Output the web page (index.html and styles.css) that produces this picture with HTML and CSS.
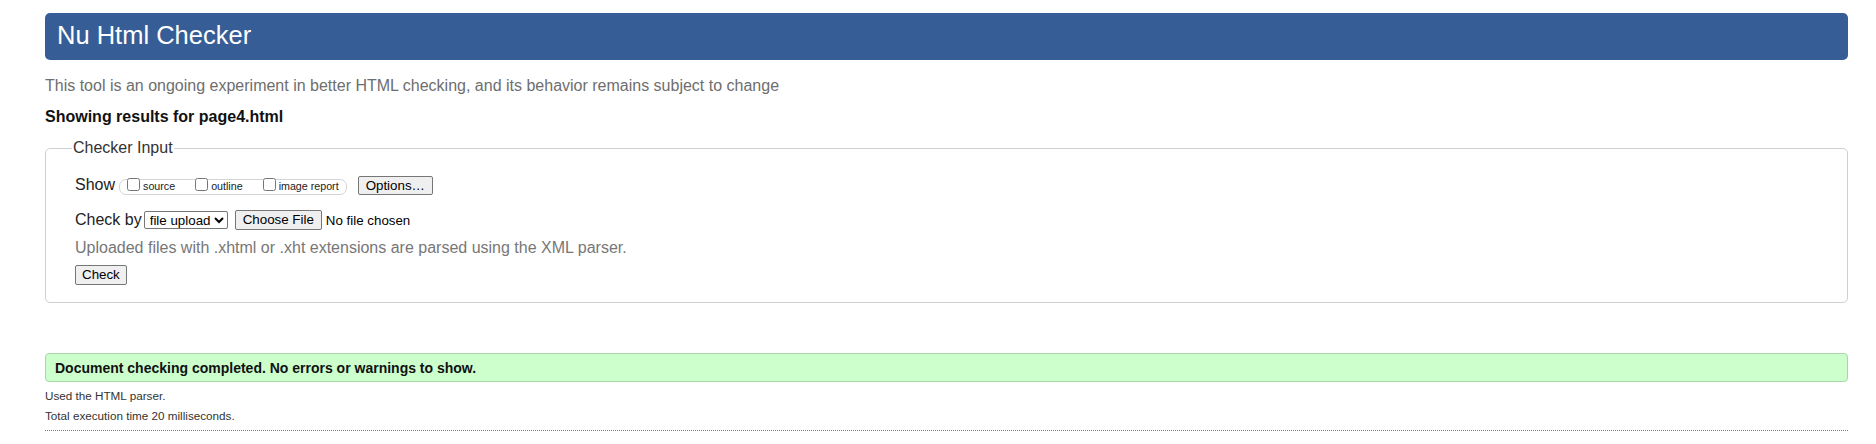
FILE: index.html
```html
<!DOCTYPE html>
<html lang="en">
<head>
<meta charset="utf-8">
<title>Showing results for page4.html - Nu Html Checker</title>
<link rel="stylesheet" href="styles.css">
</head>
<body>
<h1 class="title">Nu Html Checker</h1>
<p class="intro">This tool is an ongoing experiment in better HTML checking, and its behavior remains subject to change</p>
<p class="results-for">Showing results for page4.html</p>
<form class="checker">
  <fieldset class="input-set">
    <legend class="input-legend">Checker Input</legend>
    <div class="row show-row">
      <span class="row-label">Show</span>
      <span class="show-group">
        <label class="opt"><input type="checkbox" class="opt-box"><span class="opt-text">source</span></label>
        <label class="opt"><input type="checkbox" class="opt-box"><span class="opt-text">outline</span></label>
        <label class="opt opt-last"><input type="checkbox" class="opt-box"><span class="opt-text">image report</span></label>
      </span>
      <button type="button" class="btn options-btn">Options…</button>
    </div>
    <div class="row by-row">
      <span class="row-label">Check by</span>
      <select class="by-select"><option>file upload</option><option>address</option><option>text input</option></select>
      <span class="file-pick"><button type="button" class="btn file-btn">Choose File</button><span class="file-name">No file chosen</span></span>
    </div>
    <p class="hint">Uploaded files with .xhtml or .xht extensions are parsed using the XML parser.</p>
    <button type="button" class="btn check-btn">Check</button>
  </fieldset>
</form>
<div class="success">Document checking completed. No errors or warnings to show.</div>
<p class="stat">Used the HTML parser.</p>
<p class="stat">Total execution time 20 milliseconds.</p>
<hr class="dotted">
</body>
</html>
```

FILE: styles.css
```css
html, body {
  background: #ffffff;
}
body {
  margin: 0;
  padding: 13px 28px 0 45px;
  font-family: "Liberation Sans", Arial, sans-serif;
  font-size: 16px;
  color: #222;
}
.title {
  margin: 0;
  height: 47px;
  box-sizing: border-box;
  padding: 0 12px;
  background: #365d95;
  color: #fff;
  border-radius: 5px;
  font-size: 25.5px;
  font-weight: normal;
  line-height: 45px;
}
.intro {
  margin: 16px 0 0;
  line-height: 20px;
  color: #6e6e6e;
}
.results-for {
  margin: 11px 0 0;
  line-height: 20px;
  font-weight: bold;
  color: #111;
}
.checker {
  margin: 11px 0 0;
}
.input-set {
  margin: 0;
  padding: 16px 20px 17px 29px;
  border: 1px solid #cfcfcf;
  border-radius: 5px;
  min-width: 0;
}
.input-legend {
  padding: 0 1px;
  margin-left: -3px;
  line-height: 20px;
  color: #333;
}
.row {
  display: flex;
  align-items: center;
  height: 22px;
}
.row-label {
  line-height: 20px;
  color: #222;
}
.show-group {
  display: flex;
  align-items: flex-end;
  box-sizing: border-box;
  height: 16px;
  margin: 4px 0 0 4px;
  padding: 0 7px 0 7px;
  border: 1px solid #d4d4d4;
  border-radius: 7px;
}
.opt {
  display: flex;
  align-items: flex-end;
  height: 14px;
  margin-right: 20px;
}
.opt-last {
  margin-right: 0;
}
.opt-box {
  width: 13px;
  height: 13px;
  margin: 0 3px 3px 0;
}
.opt-text {
  font-size: 10.7px;
  line-height: 13px;
  margin-bottom: 1px;
  color: #222;
}
.btn {
  box-sizing: border-box;
  height: 20px;
  padding: 0 6px;
  font-family: "Liberation Sans", Arial, sans-serif;
  font-size: 13.33px;
  line-height: 18px;
  color: #000;
  background: #efefef;
  border: 1px solid #767676;
  border-radius: 2px;
}
.options-btn {
  margin-left: 11px;
  height: 19px;
  padding: 0 7px;
}
.by-row {
  margin-top: 13px;
}
.by-select {
  box-sizing: border-box;
  height: 18px;
  margin-left: 2px;
  padding: 0 0 0 1px;
  font-family: "Liberation Sans", Arial, sans-serif;
  font-size: 13.33px;
  color: #000;
  background: #fff;
  border: 1px solid #767676;
  border-radius: 2px;
}
.file-pick {
  display: flex;
  align-items: center;
  margin-left: 7px;
}
.file-btn {
  padding: 0 7px;
}
.file-name {
  margin-left: 4px;
  font-size: 13.33px;
  color: #000;
}
.hint {
  margin: 7px 0 7px;
  line-height: 20px;
  color: #777;
}
.check-btn {
  display: block;
}
.success {
  margin-top: 50px;
  padding: 1px 9px 0;
  line-height: 26px;
  font-size: 14px;
  font-weight: bold;
  color: #111;
  background: #ccffcc;
  border: 1px solid #a9d6a9;
  border-radius: 4px;
}
.stat {
  margin: 0;
  font-size: 11.7px;
  line-height: 20px;
  color: #333;
}
.success + .stat {
  margin-top: 4px;
}
.dotted {
  margin: 4px 0 0;
  height: 0;
  border: 0;
  border-top: 1px dotted #777;
}
```
